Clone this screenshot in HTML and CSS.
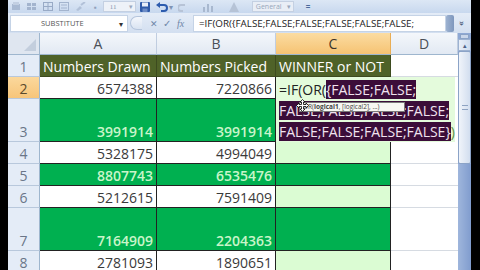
FILE: index.html
```html
<!DOCTYPE html>
<html lang="en">
<head>
  <meta charset="UTF-8" />
  <title>WINNER or NOT</title>
  <link rel="stylesheet" href="styles.css">
</head>
<body>
  <div class="screen">
    <div class="frame">
      <!-- quick access toolbar -->
      <div class="qat">
        <svg class="ico" width="10" height="9" viewBox="0 0 10 9"><rect x="1" y="2" width="8" height="6" fill="#a9bad3"/><rect x="2" y="0" width="6" height="3" fill="#c2cfe2"/></svg>
        <svg class="ico" width="10" height="9" viewBox="0 0 10 9"><rect x="0" y="1" width="4" height="3" fill="#a3b4ce"/><rect x="5" y="1" width="4" height="3" fill="#a3b4ce"/><rect x="0" y="5" width="4" height="3" fill="#a3b4ce"/><rect x="5" y="5" width="4" height="3" fill="#a3b4ce"/></svg>
        <svg class="ico" width="10" height="9" viewBox="0 0 10 9"><rect x="0.5" y="0.5" width="9" height="8" fill="none" stroke="#98aac6"/><path d="M0 4.5h10M5 0v9" stroke="#98aac6"/></svg>
        <svg class="ico" width="10" height="9" viewBox="0 0 10 9"><rect x="0.5" y="0.5" width="9" height="8" fill="none" stroke="#a3b4ce"/><path d="M2 3h6M2 6h6" stroke="#a3b4ce"/></svg>
        <svg class="ico" width="11" height="9" viewBox="0 0 11 9"><path d="M1 8l4-4 2 2-4 3z" fill="#b2c1d8"/><path d="M6 3l4-3" stroke="#b2c1d8" stroke-width="2"/></svg>
        <span class="dot">▪</span>
        <span class="sizebox">11<i>▾</i></span>
        <svg class="save" width="10" height="10" viewBox="0 0 10 10"><rect x="0" y="0" width="10" height="10" rx="1" fill="#2f5aa8"/><rect x="2" y="0.5" width="6" height="4" fill="#e8eef8"/><rect x="2.5" y="6.5" width="5" height="3.5" fill="#6d8cc6"/></svg>
        <svg class="undo" width="12" height="10" viewBox="0 0 12 10"><path d="M3 3h5a3 3 0 010 6H5" fill="none" stroke="#2d5cae" stroke-width="2"/><path d="M0 3l4-3v6z" fill="#2d5cae"/></svg>
        <span class="drop">▾</span>
        <svg class="redo" width="10" height="10" viewBox="0 0 10 10"><path d="M7 3H3a3 3 0 000 6h2" fill="none" stroke="#b7c3d6" stroke-width="2"/></svg>
        <svg class="chart" width="12" height="10" viewBox="0 0 12 10"><rect x="1" y="5" width="2" height="5" fill="#a8b8cf"/><rect x="5" y="2" width="2" height="8" fill="#a8b8cf"/><rect x="9" y="4" width="2" height="6" fill="#a8b8cf"/></svg>
        <svg class="chart" width="12" height="10" viewBox="0 0 12 10"><path d="M1 10L6 0l5 10z" fill="#b6c3d6"/></svg>
        <span class="numfmt">General<i>▾</i></span>
        <span class="more">=</span>
      </div>

      <!-- formula bar -->
      <div class="fbar">
        <div class="namebox">SUBSTITUTE<i>▾</i></div>
        <div class="pill">
          <span class="cap"></span>
          <span class="cancel">✕</span>
          <span class="enter">✓</span>
          <span class="fx">fx</span>
        </div>
        <div class="input">=IF(OR({FALSE;FALSE;FALSE;FALSE;FALSE;FALSE;</div>
        <div class="spin"></div>
        <div class="expand">»</div>
      </div>

      <div class="sheet">
        <div class="grid">
          <div class="corner"><span class="tri"></span></div>
          <div class="ch">A</div>
          <div class="ch">B</div>
          <div class="ch on">C</div>
          <div class="ch">D</div>

          <div class="rh">1</div>
          <div class="c head">Numbers Drawn</div>
          <div class="c head">Numbers Picked</div>
          <div class="c head">WINNER or NOT</div>
          <div class="c d"></div>

          <div class="rh on">2</div>
          <div class="c">6574388</div>
          <div class="c">7220866</div>

          <div class="rh">3</div>
          <div class="c g">3991914</div>
          <div class="c g">3991914</div>

          <div class="rh">4</div>
          <div class="c">5328175</div>
          <div class="c">4994049</div>
          <div class="c lg"></div>
          <div class="c d"></div>

          <div class="rh">5</div>
          <div class="c g">8807743</div>
          <div class="c g">6535476</div>
          <div class="c g"></div>
          <div class="c d"></div>

          <div class="rh">6</div>
          <div class="c">5212615</div>
          <div class="c">7591409</div>
          <div class="c lg"></div>
          <div class="c d"></div>

          <div class="rh">7</div>
          <div class="c g">7164909</div>
          <div class="c g">2204363</div>
          <div class="c g"></div>
          <div class="c d"></div>

          <div class="rh">8</div>
          <div class="c">2781093</div>
          <div class="c">1890651</div>
          <div class="c lg"></div>
          <div class="c d"></div>

          <!-- in-cell editing of C2 -->
          <div class="editor">=IF(OR(<span class="sel">{FALSE;FALSE;<br>FALSE;FALSE;FALSE;FALSE;<br>FALSE;FALSE;FALSE;FALSE}</span><span class="paren">)</span>
            <div class="tip">OR(<b>logical1</b>, [logical2], ...)</div>
            <svg class="cursor" width="13" height="13" viewBox="0 0 13 13"><path d="M6.5 0.5l2.5 2.5H7.5v2.5H10V4l2.5 2.5L10 9V7.5H7.5V10H9l-2.5 2.5L4 10h1.5V7.5H3V9L0.5 6.5 3 4v1.5h2.5V3H4z" fill="#fff" stroke="#000" stroke-width="0.8"/></svg>
          </div>
        </div>

        <div class="vscroll">
          <div class="split"></div>
          <div class="up">▴</div>
          <div class="thumb"><span class="grip"></span></div>
          <div class="track"></div>
        </div>
      </div>
    </div>
  </div>
</body>
</html>
```

FILE: styles.css
```css
* {
  box-sizing: border-box;
}

body {
  margin: 0;
  background: #000;
  font-family: 'Open Sans', sans-serif;
}

.screen {
  width: 480px;
  height: 270px;
  padding: 0 9px 0 8px;
  display: flex;
  overflow: hidden;
  background: #000;
}

.frame {
  flex: 1;
  display: flex;
  flex-direction: column;
  background: #d8e4f3;
  overflow: hidden;
}

/* toolbar */

.qat {
  height: 13px;
  display: flex;
  align-items: center;
  padding-left: 3px;
  background: linear-gradient(#dce7f5, #c8d8ee);
  color: #7d8ca3;
  font-size: 8px;
}

.qat .ico {
  margin-right: 6px;
}

.qat .dot {
  margin: 0 4px 0 2px;
  color: #8fa0ba;
}

.sizebox {
  width: 33px;
  height: 11px;
  margin-left: 2px;
  padding-left: 6px;
  display: flex;
  align-items: center;
  justify-content: space-between;
  background: #eef2f8;
  border: 1px solid #c4d0e2;
  color: #8796ad;
  font-size: 7px;
  font-family: 'Liberation Serif', serif;
}

.sizebox i,
.numfmt i {
  font-style: normal;
  font-size: 7px;
  padding-right: 2px;
  color: #9aa8bd;
}

.save {
  margin-left: 4px;
}

.undo {
  margin-left: 6px;
}

.drop {
  margin: 0 3px 0 1px;
  color: #7f93b3;
}

.redo {
  margin-left: 2px;
}

.chart {
  margin-left: 14px;
}

.numfmt {
  width: 42px;
  height: 11px;
  margin-left: 12px;
  padding-left: 3px;
  display: flex;
  align-items: center;
  justify-content: space-between;
  background: #e9eef6;
  border: 1px solid #c4d0e2;
  color: #98a6bb;
  font-size: 7px;
}

.more {
  margin-left: 12px;
  color: #4b6a9b;
  font-weight: 700;
  font-size: 8px;
}

/* formula bar */

.fbar {
  height: 20px;
  display: flex;
  align-items: center;
  padding: 1px 0 1px 2px;
  background: linear-gradient(#e4ecf7, #d3dff0);
}

.namebox {
  width: 118px;
  height: 17px;
  padding: 0 4px 0 30px;
  display: flex;
  align-items: center;
  justify-content: space-between;
  background: #fff;
  border: 1px solid #c5d3e6;
  color: #555;
  font-size: 7.5px;
}

.namebox i {
  font-style: normal;
  color: #333;
  font-size: 8px;
}

.pill {
  width: 65px;
  height: 17px;
  display: flex;
  align-items: center;
  color: #6f86a8;
  font-size: 10px;
}

.pill .cap {
  width: 12px;
  height: 14px;
  margin-left: 2px;
  border-radius: 7px 0 0 7px;
  border: 1px solid #b5c5dc;
  border-right: none;
  background: linear-gradient(#f4f7fc, #d9e3f1);
}

.pill .cancel {
  margin-left: 8px;
  font-size: 9px;
}

.pill .enter {
  margin-left: 5px;
}

.pill .fx {
  margin-left: 6px;
  font-style: italic;
  font-family: 'Liberation Serif', serif;
  font-size: 10px;
}

.input {
  width: 253px;
  height: 17px;
  padding-left: 5px;
  display: flex;
  align-items: center;
  background: #fff;
  border: 1px solid #c5d3e6;
  color: #222;
  font-size: 9.8px;
  white-space: nowrap;
  overflow: hidden;
}

.spin {
  width: 8px;
  height: 17px;
  background: linear-gradient(90deg, #9db2d1, #7e97bd);
  border-radius: 2px;
}

.expand {
  flex: 1;
  text-align: center;
  color: #2a3e5e;
  font-size: 9px;
  transform: rotate(90deg);
}

/* sheet */

.sheet {
  flex: 1;
  display: flex;
  overflow: hidden;
}

.grid {
  width: 450px;
  display: grid;
  grid-template-columns: 32px 117px 119px 115px 67px;
  grid-template-rows: 22px 22px 22px 43px 22px 22px 22px 43px 22px;
  background: #fff;
  font-size: 14px;
  line-height: 18px;
}

.corner {
  position: relative;
  background: #dfe6f0;
  border-right: 1px solid #9eb6ce;
  border-bottom: 1px solid #9eb6ce;
}

.corner .tri {
  position: absolute;
  right: 3px;
  bottom: 3px;
  width: 0;
  height: 0;
  border-left: 12px solid transparent;
  border-bottom: 12px solid #c3cedd;
}

.ch {
  display: flex;
  align-items: center;
  justify-content: center;
  background: linear-gradient(#f4f7fb, #e2e9f3);
  border-right: 1px solid #c0cde0;
  border-bottom: 1px solid #9eb6ce;
  color: #4a4f57;
}

.ch.on {
  background: linear-gradient(#fbdca2, #f6c373);
  border-right-color: #e9ad55;
  color: #3d3529;
}

.rh {
  display: flex;
  align-items: flex-end;
  justify-content: center;
  background: #e4ecf7;
  border-right: 1px solid #9eb6ce;
  border-bottom: 1px solid #b8c8dc;
  color: #6a7688;
}

.rh.on {
  background: linear-gradient(#fbd89c, #f7c57a);
  color: #5b4a2c;
}

.c {
  display: flex;
  align-items: flex-end;
  justify-content: flex-end;
  padding-right: 3px;
  border-right: 1px solid #222;
  border-bottom: 1px solid #222;
  color: #3a3a3a;
  white-space: nowrap;
  overflow: hidden;
}

.c.head {
  justify-content: flex-start;
  padding-left: 3px;
  background: #4f6228;
  color: #fff;
  border-color: #3d4b1f;
}

.c.g {
  background: #00b050;
  color: #c9f5c9;
  font-weight: 600;
}

.c.lg {
  background: #dbfcd3;
}

.c.d {
  border-right: none;
  border-bottom: 1px solid #d6dbe2;
}

.editor {
  grid-column: 4 / span 2;
  grid-row: 3 / span 2;
  position: relative;
  margin-right: 3px;
  padding: 2px 0 0 3px;
  background: #e4fbdc;
  color: #222;
  font-size: 14px;
  line-height: 21px;
  white-space: nowrap;
  z-index: 2;
}

.editor .sel {
  background: #3b0d39;
  color: #f1e3ef;
}

.editor .paren {
  color: #5b8c46;
}

.tip {
  position: absolute;
  left: 23px;
  top: 25px;
  width: 106px;
  height: 10px;
  padding-left: 3px;
  background: #f7f7f2;
  border: 1px solid #7a7a7a;
  color: #444;
  font-size: 6.5px;
  line-height: 8px;
}

.cursor {
  position: absolute;
  left: 20px;
  top: 22px;
}

/* vertical scrollbar */

.vscroll {
  flex: 1;
  display: flex;
  flex-direction: column;
  background: #8ea8d4;
}

.vscroll .split {
  height: 5px;
  margin: 1px 2px 0;
  background: #c9d6ea;
  border: 1px solid #8ba3c7;
}

.vscroll .up {
  height: 12px;
  text-align: center;
  font-size: 7px;
  line-height: 12px;
  color: #4d6388;
  background: linear-gradient(90deg, #e9eff8, #cfdcee);
  border: 1px solid #9db2d1;
}

.vscroll .thumb {
  height: 113px;
  display: flex;
  align-items: center;
  justify-content: center;
  background: linear-gradient(90deg, #f0f4fa, #d2deef);
  border: 1px solid #8ba3c7;
  border-radius: 2px;
}

.vscroll .grip {
  width: 6px;
  height: 5px;
  border-top: 1px solid #8ea3c2;
  border-bottom: 1px solid #8ea3c2;
}

.vscroll .track {
  flex: 1;
  background: linear-gradient(90deg, #9fb6dc, #809cce);
}
```
